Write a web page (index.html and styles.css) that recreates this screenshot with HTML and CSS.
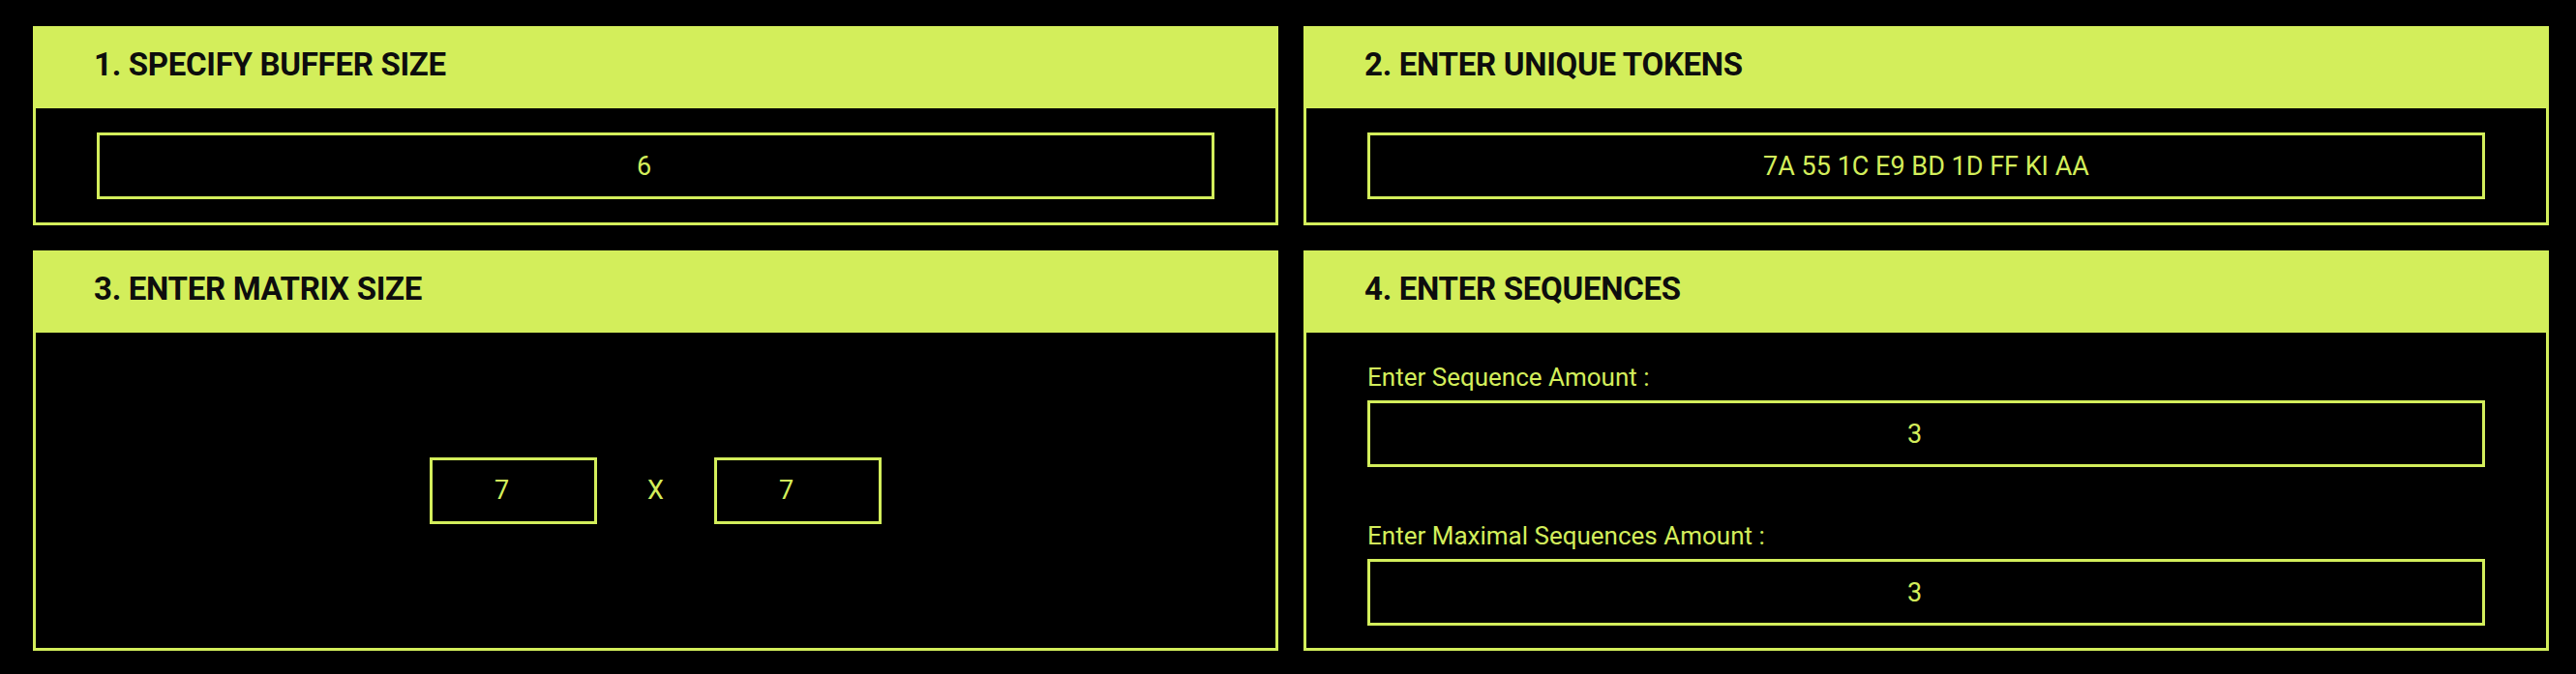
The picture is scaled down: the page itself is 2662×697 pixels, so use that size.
FILE: index.html
```html
<!DOCTYPE html>
<html lang="en">
<head>
<meta charset="utf-8">
<title>Breach Protocol Input</title>
<link rel="stylesheet" href="styles.css">
</head>
<body>
<main class="grid">
  <section class="card">
    <header class="card-head"><h2>1. SPECIFY BUFFER SIZE</h2></header>
    <div class="card-body">
      <input class="field num" type="number" value="6">
    </div>
  </section>
  <section class="card">
    <header class="card-head"><h2>2. ENTER UNIQUE TOKENS</h2></header>
    <div class="card-body">
      <input class="field" type="text" value="7A 55 1C E9 BD 1D FF KI AA">
    </div>
  </section>
  <section class="card">
    <header class="card-head"><h2>3. ENTER MATRIX SIZE</h2></header>
    <div class="card-body matrix-body">
      <div class="matrix-row">
        <input class="field num small" type="number" value="7">
        <span class="times">X</span>
        <input class="field num small" type="number" value="7">
      </div>
    </div>
  </section>
  <section class="card">
    <header class="card-head"><h2>4. ENTER SEQUENCES</h2></header>
    <div class="card-body seq-body">
      <div class="group">
        <label class="label">Enter Sequence Amount :</label>
        <input class="field num" type="number" value="3">
      </div>
      <div class="group">
        <label class="label">Enter Maximal Sequences Amount :</label>
        <input class="field num" type="number" value="3">
      </div>
    </div>
  </section>
</main>
</body>
</html>
```

FILE: styles.css
```css
* { box-sizing: border-box; }

html, body {
  margin: 0;
  background: #000;
}

body {
  font-family: Roboto, "Liberation Sans", sans-serif;
  color: #d3ee5b;
}

.grid {
  display: grid;
  grid-template-columns: 1fr 1fr;
  gap: 26px;
  padding: 27px 28px 24px 34px;
}

.card {
  border: 3px solid #d3ee5b;
  display: flex;
  flex-direction: column;
  background: #000;
}

.card-head {
  background: #d3ee5b;
  display: flex;
  align-items: center;
  padding: 0 63px 6px 63px;
  margin: -3px -3px 0 -3px;
  height: 85px;
}

.card-head h2 {
  margin: 0;
  font-family: Roboto, "Liberation Sans", sans-serif;
  font-weight: 700;
  font-size: 33px;
  line-height: 1;
  letter-spacing: -0.3px;
  color: #0d0d0d;
}

.card-body {
  padding: 25px 63px 24px 63px;
  flex: 1;
}

.field {
  display: block;
  width: 100%;
  height: 69px;
  background: #000;
  border: 3px solid #d3ee5b;
  border-radius: 0;
  color: #d3ee5b;
  font-family: Roboto, "Liberation Sans", sans-serif;
  font-size: 27px;
  text-align: center;
  padding: 0;
  outline: none;
}

.field.num {
  padding-right: 9px;
}

.field.num::-webkit-inner-spin-button,
.field.num::-webkit-outer-spin-button {
  opacity: 0;
}

.matrix-body {
  display: flex;
  align-items: center;
  justify-content: center;
  padding: 0;
}

.matrix-row {
  display: flex;
  align-items: center;
  gap: 52px;
}

.field.small {
  width: 173px;
}

.times {
  font-size: 27px;
  line-height: 1;
}

.seq-body {
  padding: 33px 63px 23px 63px;
  display: flex;
  flex-direction: column;
  gap: 58px;
}

.label {
  display: block;
  font-size: 26px;
  line-height: 26px;
  margin-bottom: 11px;
}
```
